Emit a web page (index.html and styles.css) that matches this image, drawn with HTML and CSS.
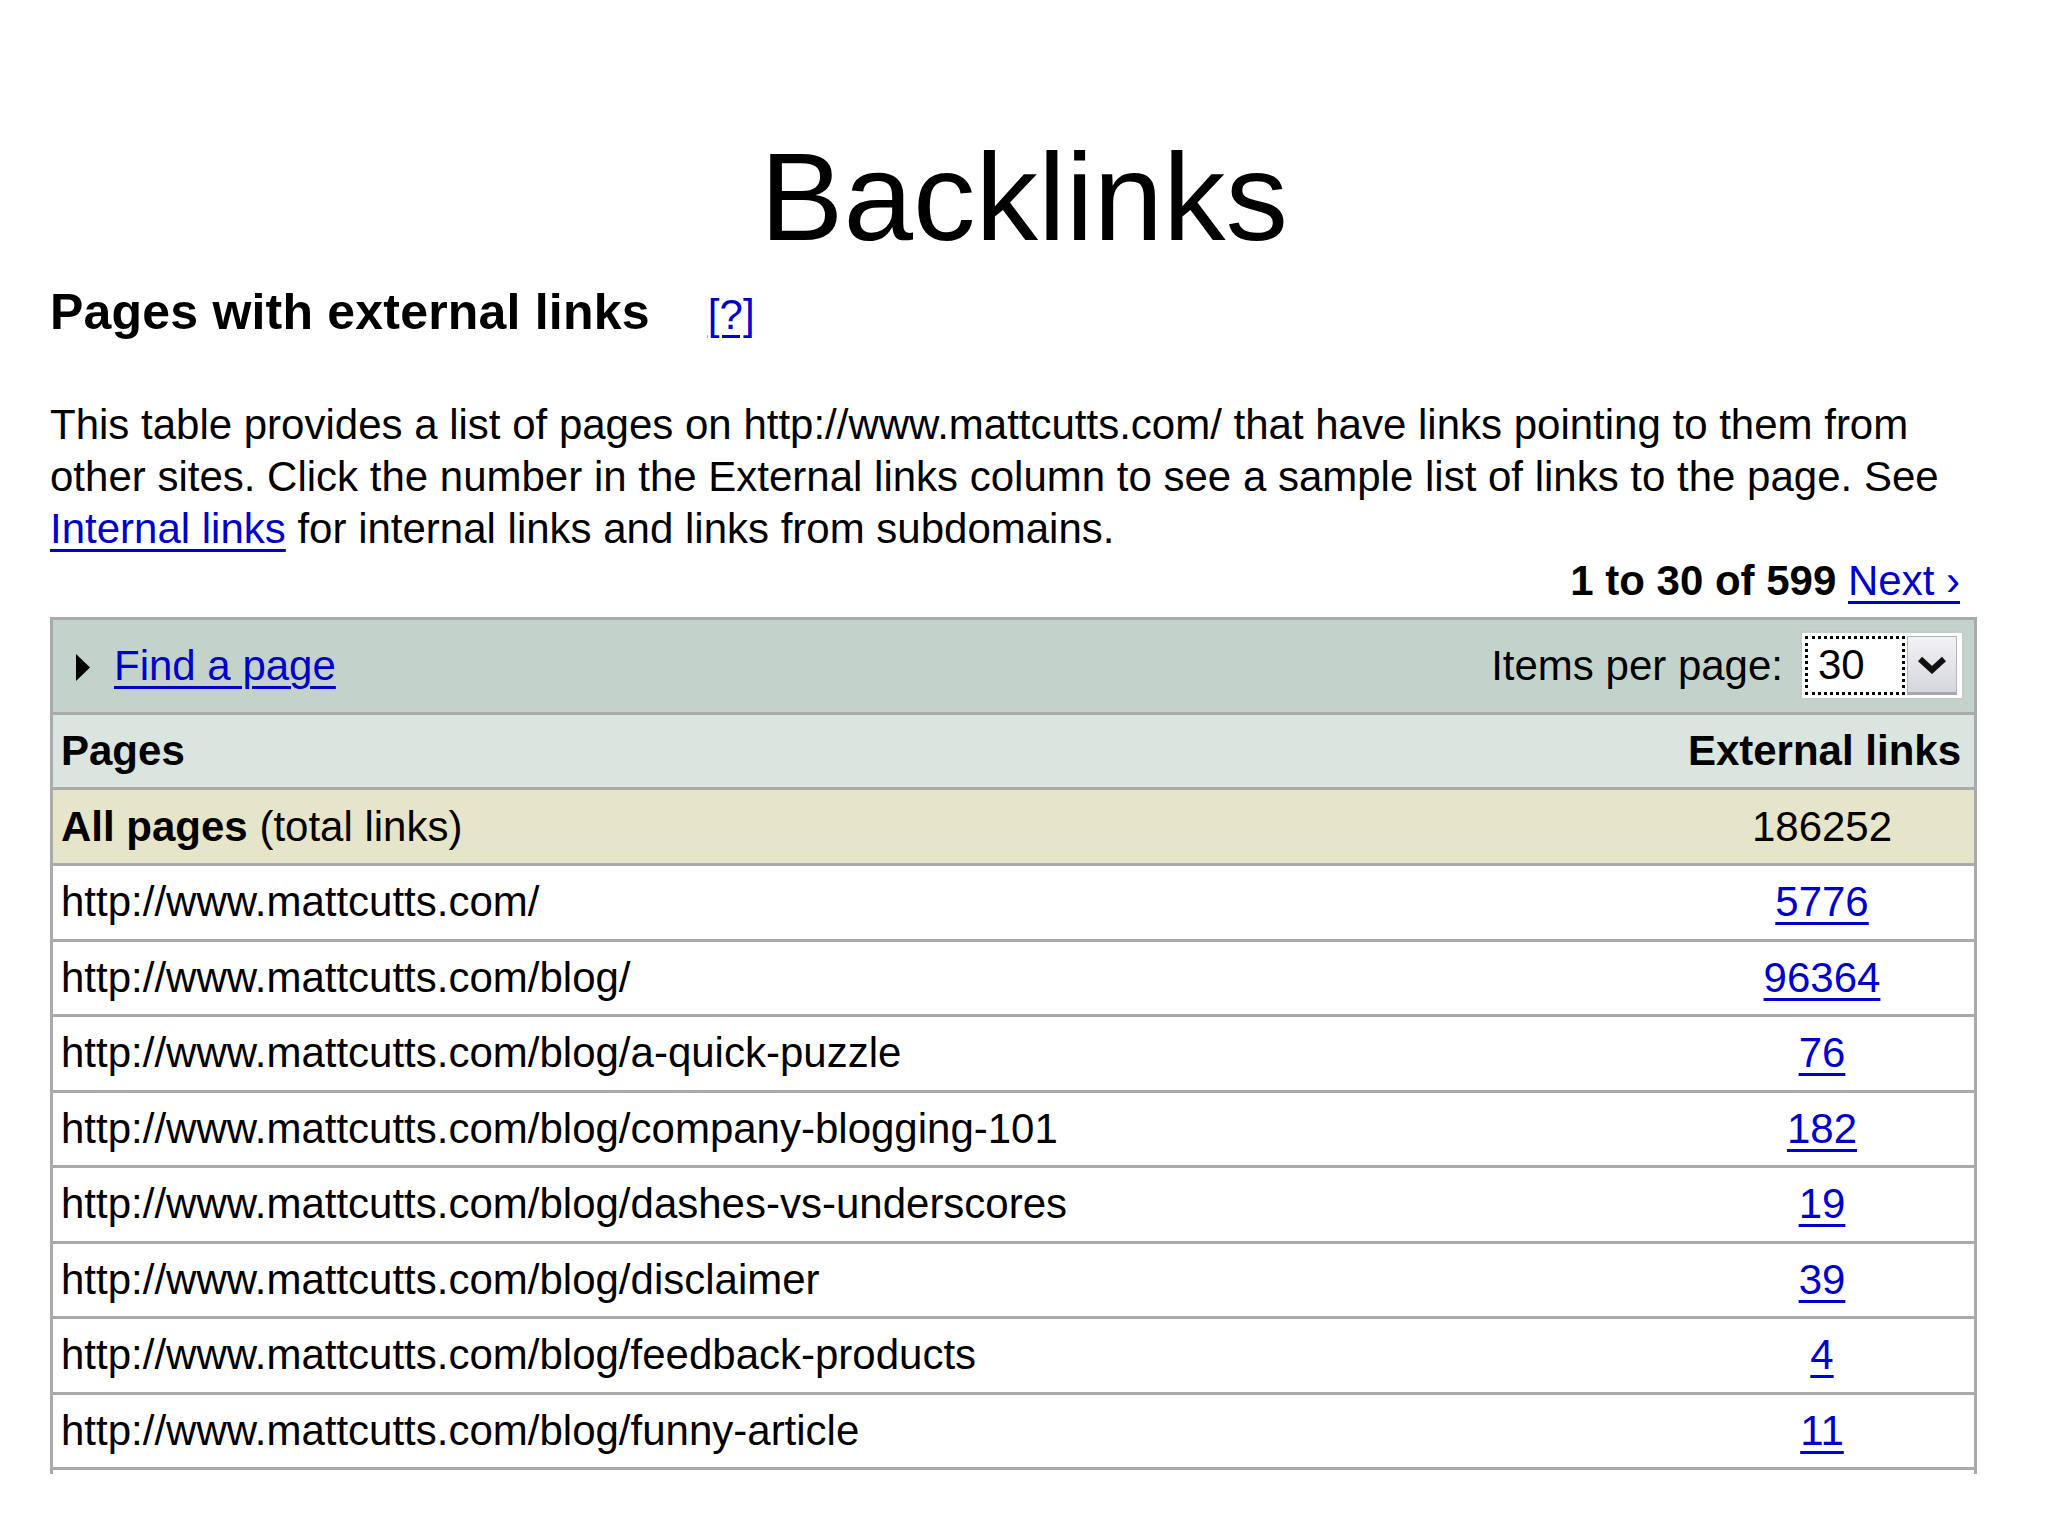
FILE: index.html
```html
<!DOCTYPE html>
<html lang="en">
<head>
<meta charset="utf-8">
<title>Backlinks</title>
<link rel="stylesheet" href="styles.css">
</head>
<body>
<div class="slide">
  <h1 class="title">Backlinks</h1>
  <div class="content">
    <h2 class="section-head">Pages with external links<a class="help" href="#">[?]</a></h2>
    <p class="intro">This table provides a list of pages on http://www.mattcutts.com/ that have links pointing to them from other sites. Click the number in the External links column to see a sample list of links to the page. See <a href="#">Internal links</a> for internal links and links from subdomains.</p>
    <div class="pager"><b>1 to 30 of 599</b> <a href="#">Next ›</a></div>
    <div class="table-clip">
      <table class="links">
        <tr class="find-row">
          <td colspan="2">
            <div class="find-bar">
              <div class="find-left">
                <svg class="tri" width="17" height="29" viewBox="0 0 17 29"><polygon points="2,1 16,14.5 2,28" fill="#000"/></svg>
                <a href="#">Find a page</a>
              </div>
              <div class="find-right">
                <span>Items per page:</span>
                <div class="select">
                  <div class="sel-value">30</div>
                  <div class="sel-btn">
                    <svg width="28" height="18" viewBox="0 0 28 18"><path d="M2 3 L14 14 L26 3" fill="none" stroke="#111" stroke-width="6" stroke-linejoin="miter"/></svg>
                  </div>
                </div>
              </div>
            </div>
          </td>
        </tr>
        <tr class="head-row">
          <th class="c-page">Pages</th>
          <th class="c-num">External links</th>
        </tr>
        <tr class="all-row">
          <td class="c-page"><b>All pages</b> (total links)</td>
          <td class="c-num">186252</td>
        </tr>
        <tr><td class="c-page">http://www.mattcutts.com/</td><td class="c-num"><a href="#">5776</a></td></tr>
        <tr><td class="c-page">http://www.mattcutts.com/blog/</td><td class="c-num"><a href="#">96364</a></td></tr>
        <tr><td class="c-page">http://www.mattcutts.com/blog/a-quick-puzzle</td><td class="c-num"><a href="#">76</a></td></tr>
        <tr><td class="c-page">http://www.mattcutts.com/blog/company-blogging-101</td><td class="c-num"><a href="#">182</a></td></tr>
        <tr><td class="c-page">http://www.mattcutts.com/blog/dashes-vs-underscores</td><td class="c-num"><a href="#">19</a></td></tr>
        <tr><td class="c-page">http://www.mattcutts.com/blog/disclaimer</td><td class="c-num"><a href="#">39</a></td></tr>
        <tr><td class="c-page">http://www.mattcutts.com/blog/feedback-products</td><td class="c-num"><a href="#">4</a></td></tr>
        <tr><td class="c-page">http://www.mattcutts.com/blog/funny-article</td><td class="c-num"><a href="#">11</a></td></tr>
      </table>
    </div>
  </div>
</div>
</body>
</html>
```

FILE: styles.css
```css
* { box-sizing: border-box; }
html, body { margin: 0; padding: 0; background: #fff; }
body { font-family: "Liberation Sans", Arial, sans-serif; color: #000; }

.slide {
  width: 2048px;
  height: 1536px;
  overflow: hidden;
  padding-top: 134px;
}

.title {
  margin: 0;
  font-size: 125px;
  line-height: 125px;
  font-weight: normal;
  text-align: center;
}

.content {
  margin-left: 50px;
  width: 1927px;
}

a {
  color: #0000cc;
  text-decoration: underline;
  text-decoration-thickness: 3px;
  text-underline-offset: 6px;
}

.section-head {
  margin: 23px 0 0;
  font-size: 50px;
  line-height: 60px;
  font-weight: bold;
  letter-spacing: 0.2px;
}
.help {
  margin-left: 58px;
  font-size: 42px;
  font-weight: normal;
}

.intro {
  margin: 54px 0 0;
  font-size: 42px;
  line-height: 52px;
}

.pager {
  font-size: 42px;
  line-height: 52px;
  text-align: right;
  padding-right: 17px;
}

.table-clip {
  margin-top: 10px;
  height: 857px;
  overflow: hidden;
  border: 3px solid #aaaaaa;
  border-bottom: 0;
}

.links {
  width: 100%;
  border-collapse: separate;
  border-spacing: 0;
  font-size: 42px;
}
.links td, .links th {
  padding: 0;
  border-bottom: 3px solid #aaaaaa;
  line-height: 72.5px;
  white-space: nowrap;
}
.links .c-page {
  text-align: left;
  padding-left: 8px;
}
.links .c-num {
  width: 304px;
  padding: 0 13px;
  text-align: center;
}

.find-row td { background: #c3d3cc; }
.find-bar {
  height: 92px;
  display: flex;
  align-items: center;
  justify-content: space-between;
  padding: 0 10px 0 21px;
  line-height: 52px;
}
.find-left {
  display: flex;
  align-items: center;
  gap: 23px;
}
.tri { display: block; margin-top: 3px; }
.find-right {
  display: flex;
  align-items: center;
  gap: 17px;
}

.select {
  display: flex;
  width: 164px;
  height: 69px;
  background: #fff;
  border: 2px solid #c4ccc8;
  padding: 3px;
  margin-top: -1px;
}
.sel-value {
  width: 100px;
  height: 59px;
  border: 3px dotted #000;
  line-height: 52px;
  padding-left: 10px;
  font-size: 42px;
}
.sel-btn {
  margin-left: 2px;
  width: 50px;
  height: 59px;
  background: linear-gradient(#f2f2f6, #d6d6de);
  border: 1px solid #b4b4bc;
  border-bottom: 3px solid #a8a8b0;
  display: flex;
  align-items: center;
  justify-content: center;
}

.head-row th {
  background: #d9e5de;
  line-height: 72px;
  font-weight: bold;
}
.head-row th.c-num { text-align: right; }

.all-row td {
  background: #e6e4c9;
  line-height: 73px;
}
```
